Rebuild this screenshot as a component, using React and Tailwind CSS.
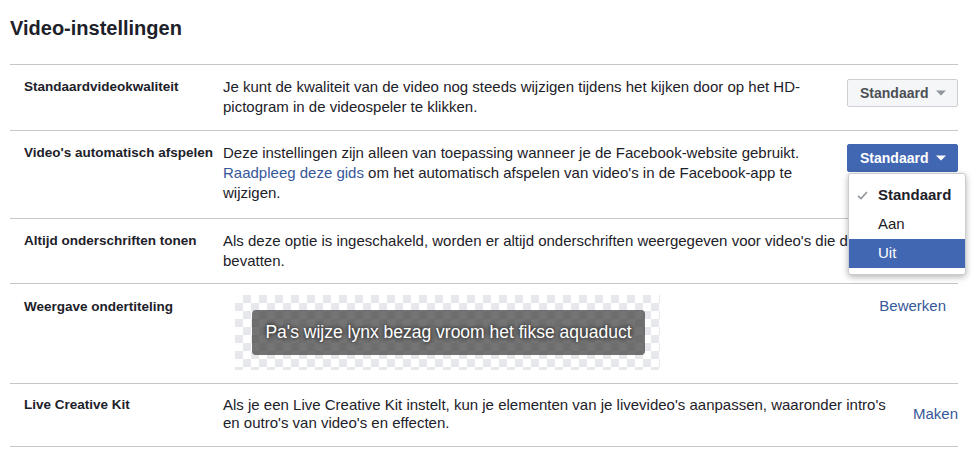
import React from "react";

function Caret({ className }) {
  return (
    <svg width="10" height="6" viewBox="0 0 10 6" className={className}>
      <path d="M0 0.5 L10 0.5 L5 5.5 Z" fill="currentColor" />
    </svg>
  );
}

function Check() {
  return (
    <svg width="11" height="9" viewBox="0 0 11 9" className="text-[#90949c]">
      <path d="M1 4.8 L4 7.6 L10 1" fill="none" stroke="currentColor" strokeWidth="1.6" />
    </svg>
  );
}

export default function App() {
  return (
    <div className="bg-white w-[975px] h-[458px] overflow-hidden font-['Liberation_Sans',Arial,sans-serif] text-[#1d2129]">
      <div className="pt-[16px] pl-[10px]">
        <h1 className="text-[20px] leading-[24px] font-bold text-[#1d2129]">Video-instellingen</h1>
      </div>
      <div className="ml-[10px] mt-[24px] w-[948px] border-b border-[#c3c6ca]">
        {/* Row 1 */}
        <div className="flex border-t border-[#c3c6ca] pl-[14px] pt-[12px] pb-[13px]">
          <div className="w-[199px] shrink-0 text-[13.5px] font-bold leading-[18px] pt-[1px]">Standaardvideokwaliteit</div>
          <div className="flex-1 pr-[20px] text-[15px] leading-[20px]">
            Je kunt de kwaliteit van de video nog steeds wijzigen tijdens het kijken door op het HD-pictogram in de videospeler te klikken.
          </div>
          <div className="shrink-0 pt-[2px]">
            <button className="flex items-center w-[111px] h-[28px] pl-[12px] bg-[#f5f6f7] border border-[#ccd0d5] rounded-[2px] text-[14px] font-bold text-[#4b4f56]">
              Standaard
              <Caret className="ml-[8px] text-[#90949c]" />
            </button>
          </div>
        </div>
        {/* Row 2 */}
        <div className="flex border-t border-[#c3c6ca] pl-[14px] pt-[12px] pb-[15px]">
          <div className="w-[199px] shrink-0 text-[13.5px] font-bold leading-[18px] pt-[1px]">Video's automatisch afspelen</div>
          <p className="flex-1 pr-[20px] text-[15px] leading-[20px]">
            Deze instellingen zijn alleen van toepassing wanneer je de Facebook-website gebruikt.{" "}
            <a className="text-[#365899]">Raadpleeg deze gids</a> om het automatisch afspelen van video's in de Facebook-app te wijzigen.
          </p>
          <div className="shrink-0 pt-[1px] relative z-10">
            <button className="flex items-center w-[111px] h-[28px] pl-[12px] bg-[#4267b2] border border-[#4267b2] rounded-[2px] text-[14px] font-bold text-white">
              Standaard
              <Caret className="ml-[8px] text-white" />
            </button>
            <div className="absolute left-[1px] top-[30px] w-[118px] bg-white border border-[#c9ccd1] rounded-[3px] shadow-[0_2px_6px_rgba(0,0,0,0.3)] pt-[7px] pb-[6px]">
              <div className="flex items-center h-[29px] pl-[8px] text-[15px] font-bold text-[#1d2129]">
                <Check />
                <span className="ml-[10px]">Standaard</span>
              </div>
              <div className="flex items-center h-[29px] pl-[29px] text-[15px] text-[#1d2129]">Aan</div>
              <div className="flex items-center h-[29px] pl-[29px] text-[15px] text-white bg-[#4267b2]">Uit</div>
            </div>
          </div>
        </div>
        {/* Row 3 */}
        <div className="flex border-t border-[#c3c6ca] pl-[14px] pt-[12px] pb-[12px]">
          <div className="w-[199px] shrink-0 text-[13.5px] font-bold leading-[18px] pt-[1px]">Altijd onderschriften tonen</div>
          <div className="flex-1 pr-[50px] text-[15px] leading-[20px]">
            Als deze optie is ingeschakeld, worden er altijd onderschriften weergegeven voor video's die deze bevatten.
          </div>
        </div>
        {/* Row 4 */}
        <div className="flex border-t border-[#c3c6ca] pl-[14px] pt-[11px] pb-[13px]">
          <div className="w-[199px] shrink-0 text-[13.5px] font-bold leading-[18px] pt-[3px]">Weergave ondertiteling</div>
          <div className="flex-1 pl-[12px]">
            <div className="w-[425px] h-[75px] flex items-center pl-[17px] bg-[conic-gradient(#e6e8eb_25%,#ffffff_0_50%,#e6e8eb_0_75%,#ffffff_0)] bg-[length:16px_16px]">
              <div className="w-[393px] h-[45px] flex items-center justify-center rounded-[4px] bg-[rgba(70,70,70,0.75)] text-white text-[17.5px] [text-shadow:0_0_4px_rgba(0,0,0,1)]">
                Pa's wijze lynx bezag vroom het fikse aquaduct
              </div>
            </div>
          </div>
          <div className="shrink-0 pr-[12px] pt-[1px] text-[15px] leading-[20px] text-[#365899]">Bewerken</div>
        </div>
        {/* Row 5 */}
        <div className="flex items-center border-t border-[#c3c6ca] pl-[14px] pt-[12px] pb-[14px]">
          <div className="w-[199px] shrink-0 self-start text-[13.5px] font-bold leading-[18px]">Live Creative Kit</div>
          <div className="flex-1 pr-[18px] text-[15px] leading-[18px]">
            Als je een Live Creative Kit instelt, kun je elementen van je livevideo's aanpassen, waaronder intro's en outro's van video's en effecten.
          </div>
          <div className="shrink-0 text-[15px] text-[#365899]">Maken</div>
        </div>
      </div>
    </div>
  );
}
